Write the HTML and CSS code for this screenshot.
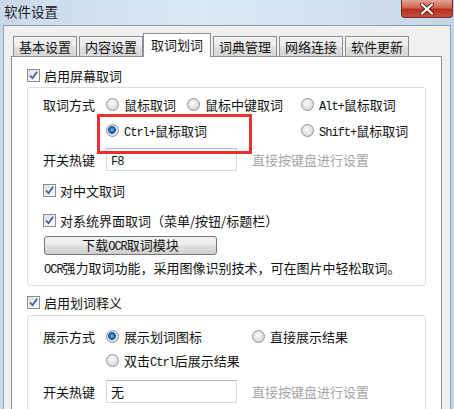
FILE: index.html
```html
<!DOCTYPE html>
<html lang="zh-CN">
<head>
    <meta charset="UTF-8">
    <title>软件设置</title>
    <link rel="stylesheet" href="styles.css">
</head>
<body>
    <div class="window">
        <div class="titlebar">
            <span class="title">软件设置</span>
            <div class="close">
                <svg width="16" height="12" viewBox="0 0 16 12">
                    <path d="M3 1.5 L13 10.5 M13 1.5 L3 10.5" stroke="#5a1f18" stroke-width="4" stroke-linecap="round"/>
                    <path d="M3 1.5 L13 10.5 M13 1.5 L3 10.5" stroke="#fff" stroke-width="2.2" stroke-linecap="round"/>
                </svg>
            </div>
        </div>

        <div class="client">
            <!-- 选项卡 -->
            <div class="tabs">
                <div class="tab">基本设置</div>
                <div class="tab">内容设置</div>
                <div class="tab active">取词划词</div>
                <div class="tab">词典管理</div>
                <div class="tab">网络连接</div>
                <div class="tab">软件更新</div>
            </div>

            <div class="panel">
                <div class="check-row">
                    <span class="cb"><svg width="11" height="11" viewBox="0 0 11 11"><path d="M2 5.5 L4.5 8.2 L9.2 1.8" stroke="#3b5fae" stroke-width="1.8" fill="none"/></svg></span>
                    <span>启用屏幕取词</span>
                </div>

                <!-- 屏幕取词 -->
                <div class="group first">
                    <div class="modes">
                        <span class="lbl">取词方式</span>
                        <span class="opt"><span class="rb"></span><span>鼠标取词</span></span>
                        <span class="opt"><span class="rb"></span><span>鼠标中键取词</span></span>
                        <span class="opt"><span class="rb"></span><span><span class="lat">Alt+</span>鼠标取词</span></span>
                        <span class="opt marked"><span class="rb on"></span><span><span class="lat">Ctrl+</span>鼠标取词</span></span>
                        <span class="opt col4"><span class="rb"></span><span><span class="lat">Shift+</span>鼠标取词</span></span>
                    </div>

                    <div class="hotkey">
                        <span class="lbl">开关热键</span>
                        <div class="field"><span class="lat">F8</span></div>
                        <span class="hint">直接按键盘进行设置</span>
                    </div>

                    <div class="check-row sub cn">
                        <span class="cb"><svg width="11" height="11" viewBox="0 0 11 11"><path d="M2 5.5 L4.5 8.2 L9.2 1.8" stroke="#3b5fae" stroke-width="1.8" fill="none"/></svg></span>
                        <span>对中文取词</span>
                    </div>
                    <div class="check-row sub ui">
                        <span class="cb"><svg width="11" height="11" viewBox="0 0 11 11"><path d="M2 5.5 L4.5 8.2 L9.2 1.8" stroke="#3b5fae" stroke-width="1.8" fill="none"/></svg></span>
                        <span>对系统界面取词（菜单/按钮/标题栏）</span>
                    </div>

                    <button class="btn">下载<span class="lat">OCR</span>取词模块</button>
                    <p class="note"><span class="lat">OCR</span>强力取词功能，采用图像识别技术，可在图片中轻松取词。</p>
                </div>

                <div class="check-row second">
                    <span class="cb"><svg width="11" height="11" viewBox="0 0 11 11"><path d="M2 5.5 L4.5 8.2 L9.2 1.8" stroke="#3b5fae" stroke-width="1.8" fill="none"/></svg></span>
                    <span>启用划词释义</span>
                </div>

                <!-- 划词释义 -->
                <div class="group last">
                    <div class="modes show">
                        <span class="lbl">展示方式</span>
                        <span class="opt"><span class="rb on"></span><span>展示划词图标</span></span>
                        <span class="opt"><span class="rb"></span><span>直接展示结果</span></span>
                        <span class="opt col2"><span class="rb"></span><span>双击<span class="lat">Ctrl</span>后展示结果</span></span>
                    </div>

                    <div class="hotkey">
                        <span class="lbl">开关热键</span>
                        <div class="field">无</div>
                        <span class="hint">直接按键盘进行设置</span>
                    </div>
                </div>
            </div>
        </div>
    </div>
</body>
</html>
```

FILE: styles.css
```css
* { margin: 0; padding: 0; box-sizing: border-box; }
body {
    font-family: "Noto Sans CJK SC", sans-serif;
    font-size: 13px;
    color: #111;
    background: #fff;
    overflow: hidden;
}
.window {
    width: 454px;
    height: 409px;
    padding: 0 3px;
    background: linear-gradient(90deg, #c9d9ec 0, #dbe7f4 45%, #d2e0f0 75%, #c3d5ea 100%);
    overflow: hidden;
}
.titlebar {
    height: 25px;
    display: flex;
    align-items: flex-start;
    margin-right: -2px;
}
.title {
    font-size: 13.5px;
    line-height: 22px;
    margin-left: 1px;
    color: #1b1b1b;
}
.close {
    margin-left: auto;
    width: 52px;
    height: 18px;
    display: flex;
    align-items: center;
    justify-content: center;
    background: linear-gradient(#e3a597 0, #d2634f 45%, #b9321f 55%, #c4503c 100%);
    border: 1px solid #7d2b20;
    border-top: none;
    border-radius: 0 0 4px 4px;
}

/* 主体 */
.client {
    height: 384px;
    background: #f0f0f0;
    border: 1px solid #8ea0b6;
    border-bottom: none;
    padding: 7px 8px 0 7px;
}
.tabs {
    display: flex;
    align-items: flex-end;
    height: 23px;
    padding-left: 2px;
}
.tab {
    height: 20px;
    line-height: 19px;
    padding: 0 5px;
    margin-right: 2px;
    border: 1px solid #8c8f97;
    border-bottom: none;
    background: linear-gradient(#f3f3f3, #ececec 45%, #dedede 55%, #d6d6d6);
}
.tab.active {
    position: relative;
    z-index: 1;
    height: 24px;
    line-height: 22px;
    margin: 0 2px -1px -2px;
    padding: 0 7px;
    background: #fff;
}
.panel {
    height: 360px;
    background: #fff;
    border: 1px solid #8c8f97;
    border-bottom: none;
    padding: 0 15px;
}

/* 复选框 / 单选框 */
.check-row {
    display: flex;
    align-items: center;
    gap: 4px;
    height: 20px;
    margin-top: 8px;
}
.check-row.second { margin-top: 6px; }
.check-row.cn { margin-top: 9px; }
.check-row.ui { margin-top: 10px; }
.cb {
    width: 13px;
    height: 13px;
    border: 1px solid #8f8f8f;
    background: linear-gradient(135deg, #dcdcdc, #f8f8f8 70%);
    display: flex;
    align-items: center;
    justify-content: center;
    flex-shrink: 0;
}
.rb {
    width: 13px;
    height: 13px;
    border-radius: 50%;
    border: 1px solid #929292;
    background: radial-gradient(circle at 45% 40%, #fdfdfd 0, #e6e6e6 45%, #c9c9c9 100%);
    flex-shrink: 0;
}
.rb.on {
    background: radial-gradient(circle at 45% 45%, #9fd8ff 0, #2f86d6 1.5px, #1a4f96 3.6px, #e9e9e9 4.2px, #d0d0d0 100%);
}

/* 分组框 */
.group {
    position: relative;
    border: 1px solid #d7dfe6;
    border-radius: 3px;
    padding: 6px 14px 5px 15px;
    margin-top: 2px;
}
.group.last {
    margin-top: 3px;
    padding-top: 10px;
    height: 120px;
}
.modes {
    display: grid;
    grid-template-columns: 63px 81px 114px auto;
    grid-auto-rows: 20px;
    row-gap: 6px;
    align-items: center;
}
.modes.show {
    grid-template-columns: 63px 146px auto;
    row-gap: 4px;
}
.opt {
    display: flex;
    align-items: center;
    gap: 5px;
    white-space: nowrap;
}
.modes .marked { grid-column: 2 / 4; position: relative; }
.modes .col4 { grid-column: 4; }
.modes .col2 { grid-column: 2 / 4; }
.marked::after {
    content: "";
    position: absolute;
    left: -9px;
    top: -7px;
    width: 149px;
    height: 34px;
    border: 3px solid #e8312f;
}
.lat {
    font-family: "Liberation Mono", monospace;
    font-size: 12px;
    letter-spacing: -1px;
}

/* 热键 */
.hotkey {
    display: flex;
    align-items: center;
    margin-top: 8px;
}
.last .hotkey { margin-top: 10px; }
.hotkey .lbl { width: 63px; }
.field {
    width: 131px;
    height: 23px;
    line-height: 21px;
    padding-left: 4px;
    border: 1px solid #d5d9de;
    border-top-color: #b8bcc2;
    background: #fff;
}
.hint {
    margin-left: 15px;
    color: #a4a4a4;
}

/* 按钮 */
.btn {
    display: block;
    width: 173px;
    height: 19px;
    margin: 6px 0 0 1px;
    font-family: inherit;
    font-size: 13px;
    line-height: 16px;
    color: #111;
    border: 1px solid #767676;
    border-radius: 3px;
    background: linear-gradient(#f4f4f4, #ebebeb 45%, #dddddd 55%, #d0d0d0);
}
.note {
    margin-top: 3px;
    line-height: 19px;
    white-space: nowrap;
    margin-left: 1px;
}
```
